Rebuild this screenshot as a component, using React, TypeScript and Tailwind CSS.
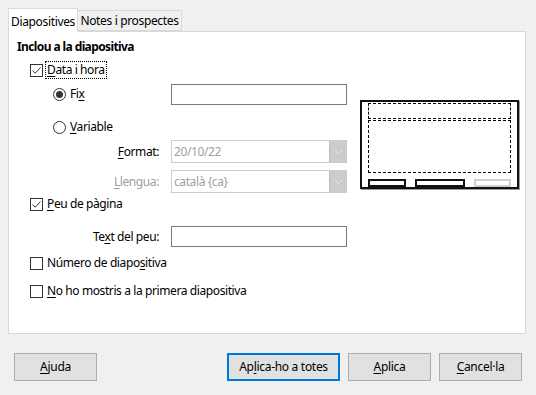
import React from 'react';

const U: React.FC<{ children: React.ReactNode }> = ({ children }) => <span className="underline underline-offset-2">{children}</span>;

const CheckBox: React.FC<{ checked?: boolean }> = ({ checked }) => (
  <span className="w-[13px] h-[13px] border border-[#333] bg-white flex items-center justify-center shrink-0">
    {checked && (
      <svg width="11" height="11" viewBox="0 0 11 11">
        <path d="M1.5 5.5 L4.2 8.2 L9.5 2.5" fill="none" stroke="#333" strokeWidth="1" />
      </svg>
    )}
  </span>
);

const Radio: React.FC<{ checked?: boolean }> = ({ checked }) => (
  <span className="w-[13px] h-[13px] rounded-full border border-[#333] bg-white flex items-center justify-center shrink-0">
    {checked && <span className="w-[7px] h-[7px] rounded-full bg-[#333]" />}
  </span>
);

const Select: React.FC<{ value: string }> = ({ value }) => (
  <div className="ml-[12px] w-[176px] h-[23px] border border-[#cccccc] bg-white flex items-center">
    <span className="flex-1 pl-[2px] text-[#a0a0a0]">{value}</span>
    <span className="w-[17px] h-[21px] bg-[#cccccc] border-l border-[#bfbfbf] flex items-center justify-center">
      <svg width="9" height="5" viewBox="0 0 9 5">
        <path d="M0.5 0.5 L4.5 4.5 L8.5 0.5" fill="none" stroke="#e6e6e6" strokeWidth="1" />
      </svg>
    </span>
  </div>
);

const Button: React.FC<{ children: React.ReactNode; w: string; primary?: boolean }> = ({ children, w, primary }) => (
  <div
    className={`${w} h-[28px] bg-[#e1e1e1] flex items-center justify-center ${primary ? 'border-2 border-[#0078d7]' : 'border border-[#adadad]'}`}
  >
    {children}
  </div>
);

export default function App() {
  return (
    <div
      className="w-[536px] h-[395px] bg-[#f0f0f0] text-[12px] text-black leading-none overflow-hidden"
      style={{ fontFamily: '"Noto Sans", "Open Sans", sans-serif' }}
    >
      {/* tabs */}
      <div className="flex items-end pl-[8px] pt-[8px] h-[32px]">
        <div className="h-[24px] w-[70px] bg-white border border-b-0 border-[#d9d9d9] relative z-10 flex items-center justify-center pt-[2px]">
          <span className="tracking-[-0.35px]">Diapositives</span>
        </div>
        <div className="h-[21px] w-[104px] bg-[#f0f0f0] border border-l-0 border-[#d9d9d9] flex items-center justify-center mb-[1px] pt-[1px]">
          <span className="tracking-[-0.35px]">Notes i prospectes</span>
        </div>
      </div>

      {/* panel */}
      <div className="ml-[8px] -mt-[1px] w-[518px] h-[303px] bg-white border border-[#d9d9d9] flex">
        <div className="w-[342px] pt-[7px] tracking-[-0.4px]">
          <div className="h-[16px] pl-[8px] flex items-center font-bold tracking-[-0.6px]">Inclou a la diapositiva</div>

          <div className="h-[20px] mt-[5px] pl-[21px] flex items-center">
            <CheckBox checked />
            <span className="ml-[3px] px-[1px] h-[16px] flex items-center outline outline-1 outline-dotted outline-black">
              <U>D</U>ata i hora
            </span>
          </div>

          <div className="h-[22px] mt-[3px] pl-[44px] flex items-center">
            <Radio checked />
            <span className="ml-[4px] w-[101px]">
              Fi<U>x</U>
            </span>
            <div className="w-[176px] h-[21px] border border-[#7a7a7a] bg-white" />
          </div>

          <div className="h-[20px] mt-[12px] pl-[44px] flex items-center">
            <Radio />
            <span className="ml-[4px]">
              <U>V</U>ariable
            </span>
          </div>

          <div className="h-[23px] mt-[3px] flex items-center">
            <span className="w-[150px] text-right">
              <U>F</U>ormat:
            </span>
            <Select value="20/10/22" />
          </div>

          <div className="h-[23px] mt-[7px] flex items-center">
            <span className="w-[150px] text-right text-[#a0a0a0]">
              <U>L</U>lengua:
            </span>
            <Select value="català {ca}" />
          </div>

          <div className="h-[20px] mt-[1px] pl-[21px] flex items-center">
            <CheckBox checked />
            <span className="ml-[4px]">
              <U>P</U>eu de pàgina
            </span>
          </div>

          <div className="h-[21px] mt-[12px] flex items-center">
            <span className="w-[150px] text-right">
              Te<U>x</U>t del peu:
            </span>
            <div className="ml-[12px] w-[176px] h-[21px] border border-[#7a7a7a] bg-white" />
          </div>

          <div className="h-[20px] mt-[6px] pl-[21px] flex items-center">
            <CheckBox />
            <span className="ml-[4px]">
              Número de diapo<U>s</U>itiva
            </span>
          </div>

          <div className="h-[20px] mt-[8px] pl-[21px] flex items-center">
            <CheckBox />
            <span className="ml-[4px]">
              <U>N</U>o ho mostris a la primera diapositiva
            </span>
          </div>
        </div>

        {/* preview */}
        <div className="pt-[68px] pl-[9px]">
          <div className="w-[159px] h-[89px] border-2 border-[#111] shadow-[1px_1px_0_#9a9a9a] bg-white flex flex-col px-[6px] pt-[1px]">
            <div className="h-[16px] border border-dashed border-black" />
            <div className="h-[53px] mt-[1px] border border-dashed border-black" />
            <div className="flex mt-[6px] gap-[9px]">
              <div className="w-[38px] h-[8px] border-2 border-[#111]" />
              <div className="w-[50px] h-[8px] border-2 border-[#111]" />
              <div className="w-[37px] h-[8px] border-2 border-[#cfcfcf]" />
            </div>
          </div>
        </div>
      </div>

      {/* buttons */}
      <div className="flex pl-[14px] pt-[19px] tracking-[-0.3px]">
        <Button w="w-[83px]">
          <U>A</U>juda
        </Button>
        <div className="ml-[130px] flex gap-[8px]">
          <Button w="w-[113px]" primary>
            Ap<U>l</U>ica-ho a totes
          </Button>
          <Button w="w-[83px]">
            <U>A</U>plica
          </Button>
          <Button w="w-[83px]">
            <U>C</U>ancel·la
          </Button>
        </div>
      </div>
    </div>
  );
}
